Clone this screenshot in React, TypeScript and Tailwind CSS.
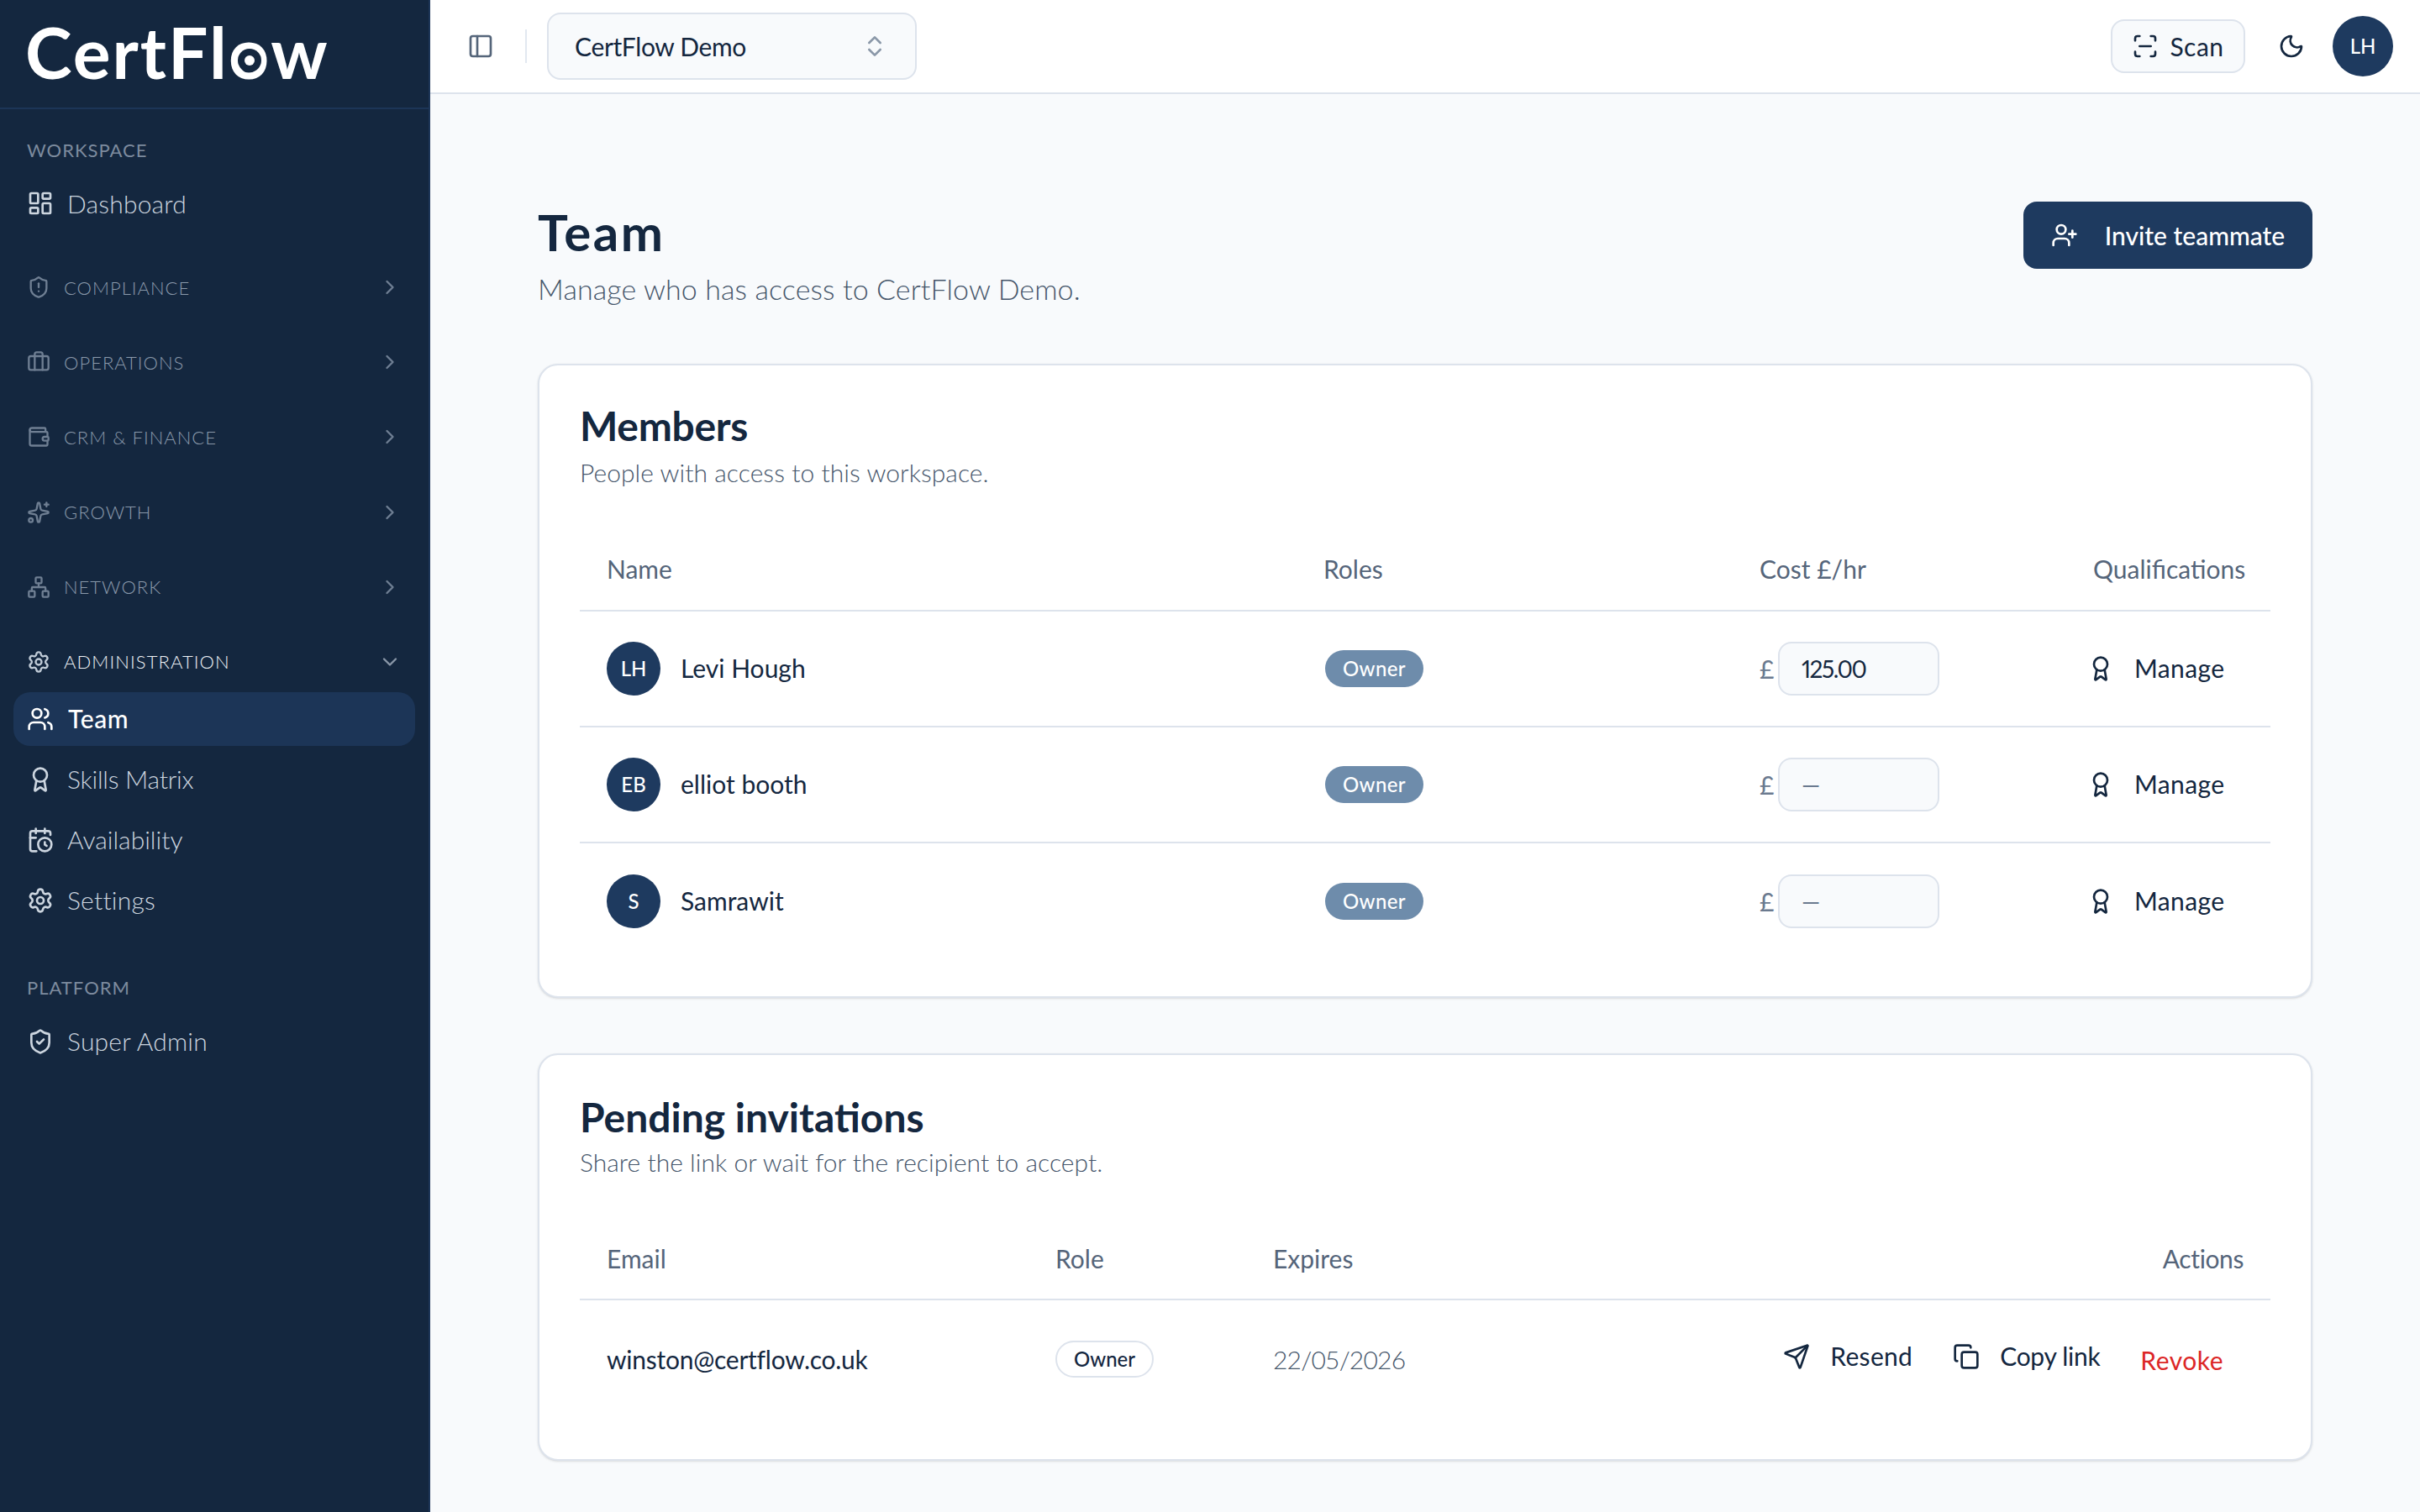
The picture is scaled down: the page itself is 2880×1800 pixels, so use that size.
import type { ReactNode } from 'react';
import {
  Award,
  Briefcase,
  CalendarClock,
  ChevronDown,
  ChevronRight,
  ChevronsUpDown,
  Copy,
  LayoutDashboard,
  Moon,
  Network,
  PanelLeft,
  ScanLine,
  Send,
  Settings,
  ShieldAlert,
  ShieldCheck,
  Sparkles,
  UserPlus,
  Users,
  Wallet,
  type LucideIcon,
} from 'lucide-react';

const groups: { label: string; icon: LucideIcon }[] = [
  { label: 'COMPLIANCE', icon: ShieldAlert },
  { label: 'OPERATIONS', icon: Briefcase },
  { label: 'CRM & FINANCE', icon: Wallet },
  { label: 'GROWTH', icon: Sparkles },
  { label: 'NETWORK', icon: Network },
];

const members = [
  { initials: 'LH', name: 'Levi Hough', cost: '125.00' },
  { initials: 'EB', name: 'elliot booth', cost: '' },
  { initials: 'S', name: 'Samrawit', cost: '' },
];

function NavItem({
  icon: Icon,
  label,
  active,
  labelClass,
}: {
  icon: LucideIcon;
  label: string;
  active?: boolean;
  labelClass?: string;
}) {
  return (
    <a
      className={
        active
          ? 'flex h-[64px] items-center gap-[17px] rounded-[20px] bg-[#1c3557] pl-[16px] text-[30px] font-medium tracking-[0.6px] text-white'
          : 'flex h-[64px] items-center gap-[16px] rounded-[20px] pl-[16px] text-[30px] font-light tracking-[0.2px] text-[#ccd5df]'
      }
    >
      <Icon size={32} />
      <span className={labelClass}>{label}</span>
    </a>
  );
}

function GroupRow({ icon: Icon, label, open }: { icon: LucideIcon; label: string; open?: boolean }) {
  return (
    <div
      className={
        open
          ? 'flex h-[64px] items-center gap-[16px] px-[16px] text-[22px] font-light tracking-[1.1px] text-[#eef2f6]'
          : 'flex h-[64px] items-center gap-[16px] px-[16px] text-[22px] font-light tracking-[1px] text-[#8a99ab]'
      }
    >
      <Icon size={28} className={open ? 'text-[#c0cbd7]' : 'text-[#6f7f93]'} />
      <span className="flex-1">{label}</span>
      {open ? <ChevronDown size={28} className="text-[#8a97a8]" /> : <ChevronRight size={28} className="text-[#6f7f93]" />}
    </div>
  );
}

function SectionLabel({ children, className }: { children: ReactNode; className: string }) {
  return (
    <div className={`flex h-[40px] items-center px-[16px] text-[22px] tracking-[1px] text-[#7d8b9e] ${className}`}>
      {children}
    </div>
  );
}

function Sidebar() {
  return (
    <aside className="flex h-full w-[512px] shrink-0 flex-col border-r-2 border-[#1c3557] bg-[#14273f]">
      <div className="flex h-[130px] items-center border-b-2 border-[#1c3557] pb-[4px] pl-[30px] text-[84px] font-bold leading-none tracking-[2px] text-white">
        CertFl
        <span className="relative">
          o
          <span className="absolute left-[25px] top-[52px] flex h-[28px] w-[28px] -translate-x-1/2 -translate-y-1/2 items-center justify-center rounded-full bg-[#14273f]">
            <span className="h-[12px] w-[12px] rounded-full bg-white" />
          </span>
        </span>
        w
      </div>
      <nav className="flex flex-col px-[16px]">
        <SectionLabel className="mt-[28px]">WORKSPACE</SectionLabel>
        <div className="mt-[12px]">
          <NavItem icon={LayoutDashboard} label="Dashboard" />
        </div>
        <div className="mt-[36px] flex flex-col gap-[25.2px]">
          {groups.map((g) => (
            <GroupRow key={g.label} icon={g.icon} label={g.label} />
          ))}
          <GroupRow icon={Settings} label="ADMINISTRATION" open />
        </div>
        <div className="mt-[4px] flex flex-col gap-[8px]">
          <NavItem icon={Users} label="Team" active />
          <NavItem icon={Award} label="Skills Matrix" labelClass="tracking-[-0.25px]" />
          <NavItem icon={CalendarClock} label="Availability" labelClass="tracking-[0px]" />
          <NavItem icon={Settings} label="Settings" />
        </div>
        <SectionLabel className="mt-[52px]">PLATFORM</SectionLabel>
        <div className="mt-[12px]">
          <NavItem icon={ShieldCheck} label="Super Admin" />
        </div>
      </nav>
    </aside>
  );
}

function Topbar() {
  return (
    <header className="flex h-[112px] shrink-0 items-center border-b-2 border-[#dde3ec] bg-white pl-[44px] pr-[32px]">
      <PanelLeft size={32} className="text-[#55657a]" />
      <div className="ml-[37px] h-[40px] w-[2px] bg-[#e2e8f0]" />
      <button
        type="button"
        className="ml-[24px] flex h-[80px] w-[440px] items-center justify-between rounded-[16px] border-2 border-[#dde3ec] bg-[#f8fafc] pl-[31px] pr-[32px] text-[30px] tracking-[-0.35px] text-[#14273f]"
      >
        CertFlow Demo
        <ChevronsUpDown size={32} className="text-[#8a97a8]" />
      </button>
      <div className="ml-auto flex items-center">
        <button
          type="button"
          className="flex h-[64px] w-[160px] items-center justify-center gap-[13px] rounded-[16px] border-2 border-[#dde3ec] bg-[#f8fafc] text-[30px] tracking-[0.5px] text-[#14273f]"
        >
          <ScanLine size={32} />
          Scan
        </button>
        <Moon size={32} className="ml-[39px] text-[#14273f]" />
        <div className="ml-[33px] flex h-[72px] w-[72px] items-center justify-center rounded-full bg-[#1e3a5f] text-[24px] font-medium text-white">
          LH
        </div>
      </div>
    </header>
  );
}

function Owner() {
  return (
    <span className="ml-[2px] flex h-[44px] w-[117px] items-center justify-center rounded-full bg-[#6e8cab] text-[24px] font-medium tracking-[0.4px] text-white">
      Owner
    </span>
  );
}

function MembersCard() {
  return (
    <section className="rounded-[24px] border-2 border-[#dde3ec] bg-white px-[48px] pb-[44px] pt-[48px] shadow-sm">
      <h2 className="h-[52px] text-[48px] font-bold leading-[48px] tracking-[-0.3px] text-[#14273f]">Members</h2>
      <p className="mt-[5px] h-[44px] text-[30px] font-light leading-[44px] tracking-[0.05px] text-[#46566b]">
        People with access to this workspace.
      </p>
      <div className="mt-[46px] grid h-[98px] grid-cols-[885px_519px_397px_1fr] items-center border-b-2 border-[#dde3ec] pb-[2px] text-[30px] text-[#55657a]">
        <span className="pl-[32px]">Name</span>
        <span>Roles</span>
        <span>Cost £/hr</span>
        <span className="pr-[32px] text-right">Qualifications</span>
      </div>
      {members.map((m, i) => (
        <div
          key={m.name}
          className={
            i < members.length - 1
              ? 'grid h-[138px] grid-cols-[885px_519px_397px_1fr] items-center border-b-2 border-[#dde3ec] text-[30px] text-[#14273f]'
              : 'grid h-[138px] grid-cols-[885px_519px_397px_1fr] items-center text-[30px] text-[#14273f]'
          }
        >
          <div className="flex items-center gap-[24px] pl-[32px]">
            <div className="flex h-[64px] w-[64px] items-center justify-center rounded-full bg-[#1e3a5f] text-[24px] font-medium text-white">
              {m.initials}
            </div>
            <span className="mb-[2px]">{m.name}</span>
          </div>
          <div>
            <Owner />
          </div>
          <div className="flex items-center gap-[6px]">
            <span className="w-[16px] text-[#6b7a8f]">£</span>
            <input
              readOnly
              value={m.cost}
              placeholder="—"
              className="h-[64px] w-[192px] rounded-[16px] border-2 border-[#dde3ec] bg-[#f8fafc] pl-[26px] text-[28px] tracking-[-1.5px] text-[#14273f] outline-none proportional-nums placeholder:text-[#6b7a8f]"
            />
          </div>
          <div className="ml-[-7px] flex items-center gap-[24px] tracking-[0.4px]">
            <Award size={32} />
            <span className="mb-[2px]">Manage</span>
          </div>
        </div>
      ))}
    </section>
  );
}

function InvitesCard() {
  return (
    <section className="mt-[66px] rounded-[24px] border-2 border-[#dde3ec] bg-white px-[48px] pb-[49px] pt-[48px] shadow-sm">
      <h2 className="h-[52px] text-[48px] font-bold leading-[52px] text-[#14273f]">Pending invitations</h2>
      <p className="mt-[5px] h-[44px] text-[30px] font-light leading-[44px] tracking-[0.02px] text-[#46566b]">
        Share the link or wait for the recipient to accept.
      </p>
      <div className="mt-[46px] grid h-[97px] grid-cols-[533px_261px_1fr_auto] items-center border-b-2 border-[#dde3ec] pb-[1px] text-[30px] text-[#55657a]">
        <span className="pl-[32px]">Email</span>
        <span className="pl-[33px]">Role</span>
        <span className="pl-[31px]">Expires</span>
        <span className="pr-[32px] tracking-[-0.4px]">Actions</span>
      </div>
      <div className="grid h-[140px] grid-cols-[533px_261px_1fr_auto] items-center text-[30px] text-[#14273f]">
        <span className="pl-[32px] tracking-[-0.25px]">winston@certflow.co.uk</span>
        <div className="pl-[33px]">
          <span className="flex h-[44px] w-[117px] items-center justify-center rounded-full border-2 border-[#dde3ec] text-[24px] font-medium">
            Owner
          </span>
        </div>
        <span className="pl-[31px] font-light tracking-[-0.8px] text-[#46566b]">22/05/2026</span>
        <div className="mb-[7px] flex items-center pr-[56px]">
          <Send size={32} />
          <span className="ml-[24px] tracking-[0.3px]">Resend</span>
          <Copy size={32} className="ml-[48px]" />
          <span className="ml-[24px] tracking-[-0.3px]">Copy link</span>
          <span className="ml-[48px] mt-[10px] tracking-[0.5px] text-[#dc2626]">Revoke</span>
        </div>
      </div>
    </section>
  );
}

export default function App() {
  return (
    <div className="flex h-screen overflow-hidden bg-[#f8fafc] font-['Lato',sans-serif]">
      <Sidebar />
      <main className="flex min-w-0 flex-1 flex-col">
        <Topbar />
        <div className="px-[128px] pt-[128px]">
          <div className="flex items-start justify-between">
            <div>
              <h1 className="h-[80px] text-[60px] font-bold leading-[72px] tracking-[2.5px] text-[#14273f]">Team</h1>
              <p className="h-[50px] text-[34px] font-light leading-[48px] tracking-[0.1px] text-[#46566b]">
                Manage who has access to CertFlow Demo.
              </p>
            </div>
            <button
              type="button"
              className="flex h-[80px] w-[344px] items-center justify-center gap-[32px] rounded-[16px] bg-[#1e3a5f] text-[30px] font-medium text-white"
            >
              <UserPlus size={32} />
              Invite teammate
            </button>
          </div>
          <div className="mt-[63px]">
            <MembersCard />
            <InvitesCard />
          </div>
        </div>
      </main>
    </div>
  );
}
